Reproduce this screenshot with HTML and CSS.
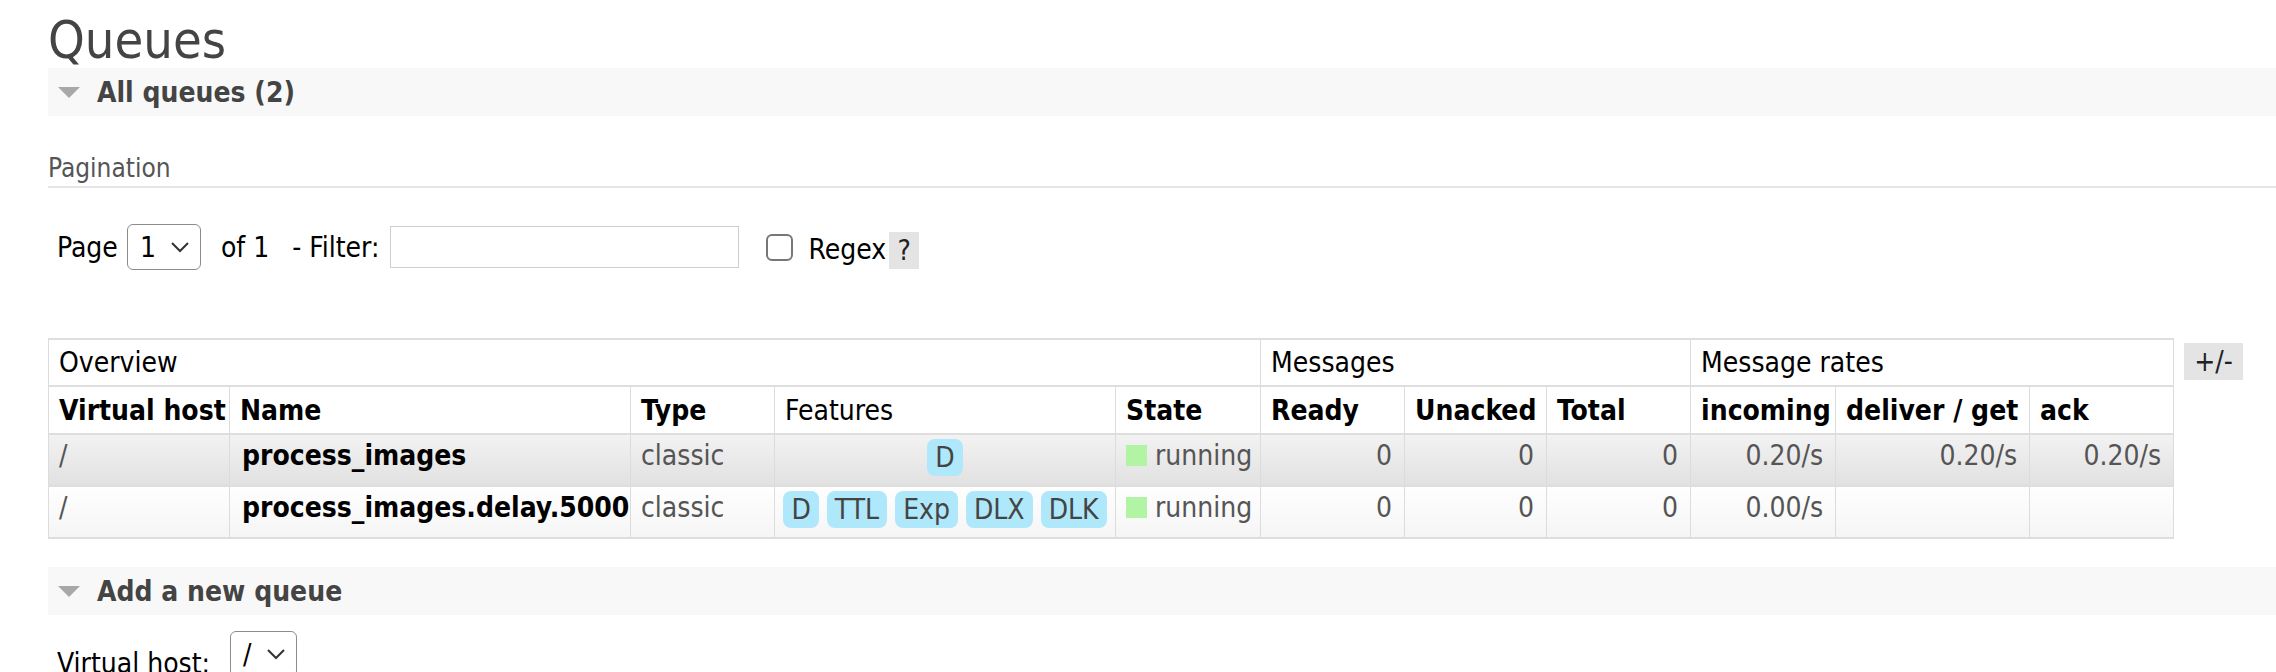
FILE: index.html
```html
<!DOCTYPE html>
<html lang="en">
<head>
<meta charset="utf-8">
<title>Queues</title>
<link rel="stylesheet" href="styles.css">
</head>
<body>
<div class="page">
  <h1 class="title">Queues</h1>

  <div class="section-bar">
    <span class="tri"></span>
    <h2 class="section-title">All queues (2)</h2>
  </div>

  <h3 class="sub">Pagination</h3>

  <div class="pager">
    <span class="lbl lbl-page">Page</span>
    <span class="select sel-page"><span class="sel-val">1</span><svg class="chev" width="20" height="12" viewBox="0 0 20 12"><path d="M2 2 L10 10 L18 2" fill="none" stroke="#333" stroke-width="2"/></svg></span>
    <span class="lbl lbl-of">of 1</span>
    <span class="lbl lbl-filter">- Filter:</span>
    <span class="input"></span>
    <span class="checkbox"></span>
    <span class="lbl lbl-regex">Regex</span>
    <span class="help">?</span>
  </div>

  <div class="table-wrap">
    <table class="list">
      <colgroup>
        <col class="c-vhost"><col class="c-name"><col class="c-type"><col class="c-feat"><col class="c-state">
        <col class="c-ready"><col class="c-unacked"><col class="c-total">
        <col class="c-in"><col class="c-deliver"><col class="c-ack">
      </colgroup>
      <thead>
        <tr class="group">
          <th colspan="5">Overview</th>
          <th colspan="3">Messages</th>
          <th colspan="3">Message rates</th>
        </tr>
        <tr class="head">
          <th>Virtual host</th>
          <th>Name</th>
          <th>Type</th>
          <th class="plain">Features</th>
          <th>State</th>
          <th>Ready</th>
          <th>Unacked</th>
          <th>Total</th>
          <th>incoming</th>
          <th>deliver / get</th>
          <th>ack</th>
        </tr>
      </thead>
      <tbody>
        <tr class="row-odd">
          <td class="muted">/</td>
          <td class="qname">process_images</td>
          <td class="muted">classic</td>
          <td class="features"><span class="badge">D</span></td>
          <td class="muted"><span class="dot"></span>running</td>
          <td class="num">0</td>
          <td class="num">0</td>
          <td class="num">0</td>
          <td class="num">0.20/s</td>
          <td class="num">0.20/s</td>
          <td class="num">0.20/s</td>
        </tr>
        <tr class="row-even">
          <td class="muted">/</td>
          <td class="qname">process_images.delay.5000</td>
          <td class="muted">classic</td>
          <td class="features"><span class="badge">D</span><span class="badge">TTL</span><span class="badge">Exp</span><span class="badge">DLX</span><span class="badge">DLK</span></td>
          <td class="muted"><span class="dot"></span>running</td>
          <td class="num">0</td>
          <td class="num">0</td>
          <td class="num">0</td>
          <td class="num">0.00/s</td>
          <td class="num"></td>
          <td class="num"></td>
        </tr>
      </tbody>
    </table>
    <span class="toggle">+/-</span>
  </div>

  <div class="section-bar section-add">
    <span class="tri"></span>
    <h2 class="section-title">Add a new queue</h2>
  </div>

  <div class="form-row">
    <span class="lbl lbl-vh">Virtual host:</span>
    <span class="select sel-vh"><span class="sel-val">/</span><svg class="chev" width="20" height="12" viewBox="0 0 20 12"><path d="M2 2 L10 10 L18 2" fill="none" stroke="#333" stroke-width="2"/></svg></span>
  </div>
</div>
</body>
</html>
```

FILE: styles.css
```css
* { box-sizing: border-box; }

html, body {
  margin: 0;
  padding: 0;
  background: #fff;
}

body {
  font-family: "DejaVu Sans Condensed", "Liberation Sans", sans-serif;
  font-size: 28px;
  color: #484848;
}

.page {
  padding-left: 48px;
  overflow: hidden;
}

.title {
  margin: 12px 0 0;
  font-size: 52px;
  line-height: 56px;
  font-weight: normal;
  color: #444;
}

.section-bar {
  display: flex;
  align-items: center;
  height: 48px;
  background: #f8f8f8;
}

.tri {
  width: 0;
  height: 0;
  border-left: 11px solid transparent;
  border-right: 11px solid transparent;
  border-top: 11px solid #a8a8a8;
  margin-left: 10px;
  margin-right: 17px;
}

.section-title {
  margin: 0;
  font-size: 28px;
  font-weight: bold;
  color: #444;
}

.sub {
  margin: 34px 0 0;
  font-size: 26px;
  line-height: 36px;
  font-weight: normal;
  color: #555;
  border-bottom: 2px solid #e6e6e6;
}

.pager {
  display: flex;
  align-items: center;
  height: 46px;
  margin-top: 36px;
  padding-left: 9px;
}

.lbl {
  color: #000;
  white-space: nowrap;
}

.select {
  display: inline-flex;
  align-items: center;
  justify-content: space-between;
  height: 46px;
  border: 1px solid #8c8c8c;
  border-radius: 6px;
  padding: 0 10px 0 12px;
  color: #000;
  background: #fff;
}

.sel-page { width: 74px; margin-left: 9px; }

.chev { display: block; }

.lbl-of { margin-left: 20px; }
.lbl-filter { margin-left: 23px; }

.input {
  width: 349px;
  height: 42px;
  margin-left: 11px;
  border: 1px solid #cfcfcf;
  background: #fff;
}

.checkbox {
  width: 27px;
  height: 27px;
  margin-left: 27px;
  border: 2px solid #777;
  border-radius: 6px;
  background: #fff;
}

.lbl-regex {
  margin-left: 15px;
  padding-top: 5px;
}

.help {
  display: flex;
  align-items: center;
  justify-content: center;
  width: 30px;
  height: 37px;
  margin-left: 3px;
  margin-top: 6px;
  background: #e4e4e4;
  color: #222;
}

.table-wrap {
  display: flex;
  align-items: flex-start;
  margin-top: 68px;
}

.list {
  border-collapse: collapse;
  table-layout: fixed;
  width: 2125px;
  flex: none;
}

.c-vhost { width: 181px; }
.c-name { width: 401px; }
.c-type { width: 144px; }
.c-feat { width: 341px; }
.c-state { width: 145px; }
.c-ready { width: 144px; }
.c-unacked { width: 142px; }
.c-total { width: 144px; }
.c-in { width: 145px; }
.c-deliver { width: 194px; }
.c-ack { width: 144px; }

.list th,
.list td {
  padding: 0 10px;
  white-space: nowrap;
  overflow: hidden;
  text-align: left;
  border-left: 1px solid #dcdcdc;
  border-right: 1px solid #dcdcdc;
  border-top: 2px solid #dedede;
  border-bottom: 2px solid #dedede;
}

.group th {
  height: 47px;
  font-weight: normal;
  color: #000;
  background: #fff;
}

.head th {
  height: 48px;
  font-weight: bold;
  color: #000;
  background: #fff;
}

.head th.plain { font-weight: normal; }

.list td {
  height: 52px;
  padding-bottom: 9px;
  color: #555;
}

.row-odd td { background: linear-gradient(#f2f2f2, #e1e1e1); }
.row-even td { background: linear-gradient(#fefefe, #f5f5f5); }

.list td.qname {
  font-weight: bold;
  color: #000;
  padding-left: 12px;
}

.list td.num { text-align: right; padding-right: 12px; }

.list td.features {
  text-align: center;
  padding: 0 2px 5px;
}

.badge {
  display: inline-block;
  height: 37px;
  line-height: 37px;
  padding: 0 8px;
  margin: 0 4px;
  border-radius: 8px;
  background: #aee8fa;
  color: #444;
  vertical-align: middle;
}

.dot {
  display: inline-block;
  width: 21px;
  height: 21px;
  margin-right: 8px;
  background: #b1f4a4;
  vertical-align: -1px;
}

.toggle {
  display: flex;
  align-items: center;
  justify-content: center;
  width: 59px;
  height: 37px;
  margin-left: 10px;
  margin-top: 5px;
  background: #e4e4e4;
  color: #222;
  flex: none;
}

.section-add { margin-top: 28px; }

.form-row {
  display: flex;
  align-items: flex-start;
  padding-left: 9px;
}

.lbl-vh {
  margin-top: 33px;
  line-height: 32px;
}

.sel-vh {
  width: 67px;
  margin-top: 16px;
  margin-left: 20px;
}
```
